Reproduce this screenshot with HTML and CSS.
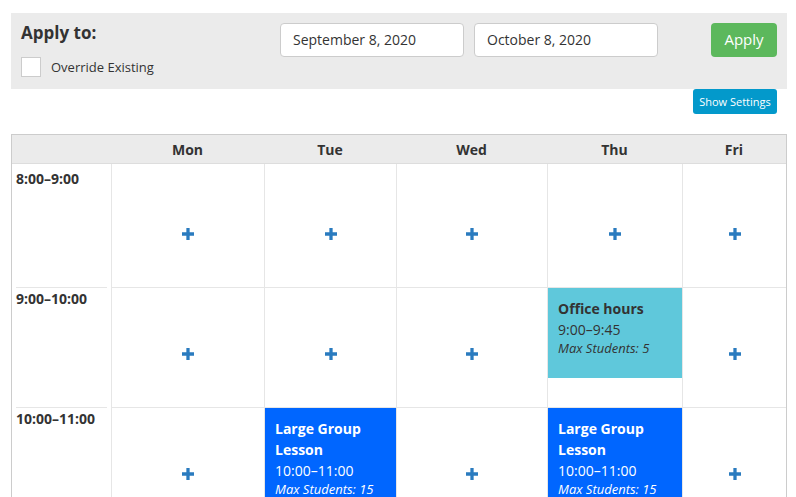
FILE: index.html
```html
<!DOCTYPE html>
<html lang="en">
  <head>
    <title>Weekly Schedule</title>
    <meta charset="UTF-8" />
    <meta name="viewport" content="width=device-width" />
    <link rel="stylesheet" href="styles.css">
  </head>
  <body>
    <main class="page">
      <div class="apply-bar">
        <div class="apply-left">
          <h2 class="apply-title">Apply to:</h2>
          <label class="override">
            <span class="checkbox"></span>
            Override Existing
          </label>
        </div>
        <input class="date-input" type="text" value="September 8, 2020" />
        <input class="date-input" type="text" value="October 8, 2020" />
        <button class="btn btn-apply">Apply</button>
      </div>

      <div class="settings-row">
        <button class="btn btn-settings">Show Settings</button>
      </div>

      <div class="schedule">
        <!-- header -->
        <div class="head"></div>
        <div class="head">Mon</div>
        <div class="head">Tue</div>
        <div class="head">Wed</div>
        <div class="head">Thu</div>
        <div class="head">Fri</div>

        <!-- 8:00 -->
        <div class="slot-time first"><div class="slot-label">8:00&ndash;9:00</div></div>
        <div class="slot first"><svg class="add" viewBox="0 0 11 11"><path d="M4 0h3v11h-3zM0 4h11v3h-11z" /></svg></div>
        <div class="slot first"><svg class="add" viewBox="0 0 11 11"><path d="M4 0h3v11h-3zM0 4h11v3h-11z" /></svg></div>
        <div class="slot first"><svg class="add" viewBox="0 0 11 11"><path d="M4 0h3v11h-3zM0 4h11v3h-11z" /></svg></div>
        <div class="slot first"><svg class="add" viewBox="0 0 11 11"><path d="M4 0h3v11h-3zM0 4h11v3h-11z" /></svg></div>
        <div class="slot first"><svg class="add" viewBox="0 0 11 11"><path d="M4 0h3v11h-3zM0 4h11v3h-11z" /></svg></div>

        <!-- 9:00 -->
        <div class="slot-time"><div class="slot-label">9:00&ndash;10:00</div></div>
        <div class="slot"><svg class="add" viewBox="0 0 11 11"><path d="M4 0h3v11h-3zM0 4h11v3h-11z" /></svg></div>
        <div class="slot"><svg class="add" viewBox="0 0 11 11"><path d="M4 0h3v11h-3zM0 4h11v3h-11z" /></svg></div>
        <div class="slot"><svg class="add" viewBox="0 0 11 11"><path d="M4 0h3v11h-3zM0 4h11v3h-11z" /></svg></div>
        <div class="slot busy">
          <div class="event event-info dur-45">
            <div class="event-title">Office hours</div>
            <div class="event-time">9:00&ndash;9:45</div>
            <div class="event-max">Max Students: 5</div>
          </div>
        </div>
        <div class="slot"><svg class="add" viewBox="0 0 11 11"><path d="M4 0h3v11h-3zM0 4h11v3h-11z" /></svg></div>

        <!-- 10:00 -->
        <div class="slot-time"><div class="slot-label">10:00&ndash;11:00</div></div>
        <div class="slot"><svg class="add" viewBox="0 0 11 11"><path d="M4 0h3v11h-3zM0 4h11v3h-11z" /></svg></div>
        <div class="slot busy">
          <div class="event event-group dur-60">
            <div class="event-title">Large Group Lesson</div>
            <div class="event-time">10:00&ndash;11:00</div>
            <div class="event-max">Max Students: 15</div>
          </div>
        </div>
        <div class="slot"><svg class="add" viewBox="0 0 11 11"><path d="M4 0h3v11h-3zM0 4h11v3h-11z" /></svg></div>
        <div class="slot busy">
          <div class="event event-group dur-60">
            <div class="event-title">Large Group Lesson</div>
            <div class="event-time">10:00&ndash;11:00</div>
            <div class="event-max">Max Students: 15</div>
          </div>
        </div>
        <div class="slot"><svg class="add" viewBox="0 0 11 11"><path d="M4 0h3v11h-3zM0 4h11v3h-11z" /></svg></div>
      </div>
    </main>
  </body>
</html>
```

FILE: styles.css
```css
* {
  box-sizing: border-box;
}

body {
  margin: 0;
  font-family: "Open Sans", "Liberation Sans", sans-serif;
  color: #333;
  background-color: white;
}

.page {
  padding: 13px 9px 0 11px;
}

/* Apply bar */
.apply-bar {
  display: flex;
  align-items: flex-start;
  height: 76px;
  padding: 10px;
  background: #ebebeb;
}

.apply-left {
  flex: 0 0 259px;
}

.apply-title {
  margin: 0;
  font-size: 17px;
  line-height: 20px;
  font-weight: bold;
  color: #333;
}

.override {
  display: flex;
  align-items: center;
  gap: 10px;
  margin-top: 14px;
  font-size: 13px;
  line-height: 20px;
  color: #333;
}

.checkbox {
  width: 20px;
  height: 20px;
  background: white;
  border: 1px solid #ccc;
}

.date-input {
  width: 184px;
  height: 34px;
  margin: 0 10px 0 0;
  padding: 0 12px 2px;
  border: 1px solid #ccc;
  border-radius: 4px;
  background: white;
  font-family: inherit;
  font-size: 14px;
  color: #333;
}

.btn {
  border: none;
  font-family: inherit;
  color: white;
  cursor: pointer;
}

.btn-apply {
  margin-left: auto;
  width: 66px;
  height: 34px;
  padding: 0 0 2px;
  border-radius: 4px;
  background: #5cb85c;
  font-size: 15px;
}

.settings-row {
  display: flex;
  justify-content: flex-end;
  padding-right: 10px;
}

.btn-settings {
  width: 84px;
  height: 25px;
  padding: 0;
  border-radius: 3px;
  background: #0399cb;
  font-size: 11px;
}

/* Schedule grid */
.schedule {
  display: grid;
  grid-template-columns: 99px 153px 132px 151px 135px 104px;
  grid-template-rows: 29px 123px 120px 120px;
  margin-top: 20px;
  border: 1px solid #ccc;
  border-bottom: none;
}

.head {
  padding-top: 1px;
  background: #ebebeb;
  border-bottom: 1px solid #ddd;
  font-size: 14px;
  line-height: 27px;
  font-weight: bold;
  text-align: center;
  color: #333;
}

.slot-time {
  padding: 0 4px;
}

.slot-label {
  height: 100%;
  padding-top: 1px;
  border-top: 1px solid #e6e6e6;
  font-size: 14px;
  line-height: 20px;
  font-weight: bold;
}

.slot-time.first .slot-label {
  border-top: none;
  padding-top: 5px;
}

.slot {
  display: flex;
  justify-content: center;
  align-items: flex-start;
  padding-top: 60px;
  border-left: 1px solid #e6e6e6;
  border-top: 1px solid #e6e6e6;
  overflow: hidden;
}

.slot.first {
  border-top: none;
  padding-top: 64px;
}

.slot.busy {
  padding-top: 0;
}

.add {
  width: 12px;
  height: 12px;
  fill: #2a7bbf;
}

/* Events */
.event {
  width: 100%;
  padding: 10px;
}

.dur-45 {
  height: 90px;
}

.dur-60 {
  height: 119px;
}

.event-info {
  background: #5fc8db;
  color: #333;
}

.event-group {
  background: #0066ff;
  color: white;
}

.event-title {
  font-size: 14px;
  line-height: 21px;
  font-weight: bold;
}

.event-time {
  font-size: 14px;
  line-height: 21px;
}

.event-max {
  font-size: 13px;
  line-height: 17px;
  font-style: italic;
}
```
